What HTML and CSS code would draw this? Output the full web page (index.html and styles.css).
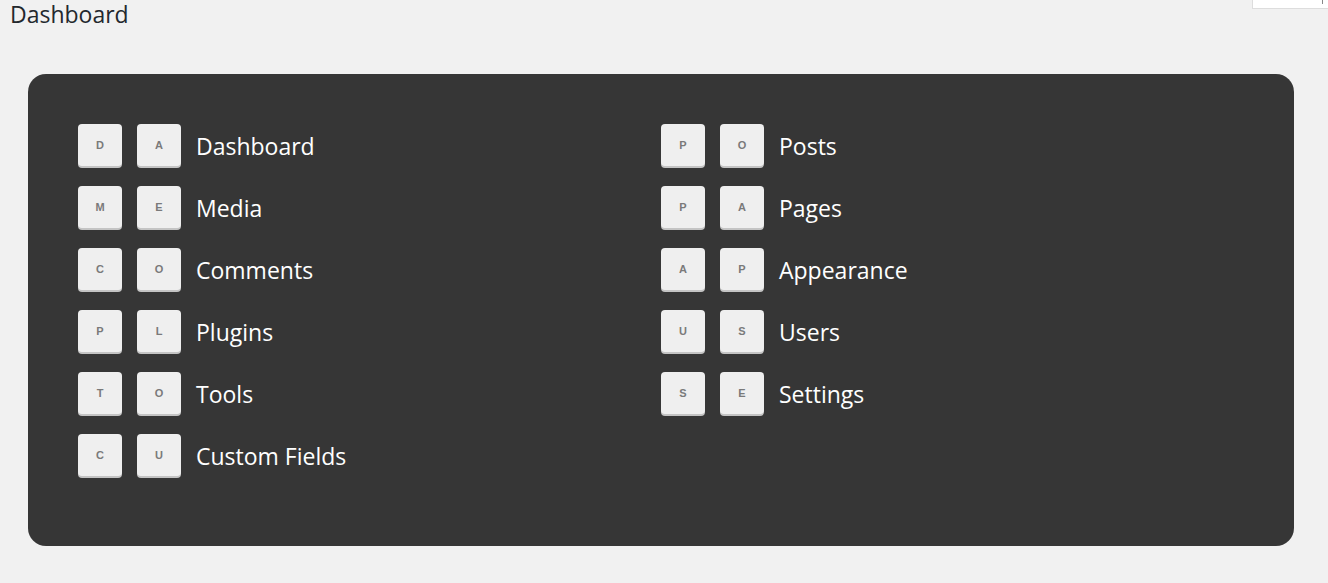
FILE: index.html
```html
<!DOCTYPE html>
<html>
<head>
<meta charset="utf-8">
<link rel="stylesheet" href="styles.css">
</head>
<body>
<div class="page">
  <div class="screen-tab"><span class="tab-mark"></span></div>
  <h1 class="title">Dashboard</h1>
  <div class="panel">
    <div class="grid">
      <div class="row"><span class="key">D</span><span class="key">A</span><span class="label">Dashboard</span></div>
      <div class="row"><span class="key">P</span><span class="key">O</span><span class="label">Posts</span></div>
      <div class="row"><span class="key">M</span><span class="key">E</span><span class="label">Media</span></div>
      <div class="row"><span class="key">P</span><span class="key">A</span><span class="label">Pages</span></div>
      <div class="row"><span class="key">C</span><span class="key">O</span><span class="label">Comments</span></div>
      <div class="row"><span class="key">A</span><span class="key">P</span><span class="label">Appearance</span></div>
      <div class="row"><span class="key">P</span><span class="key">L</span><span class="label">Plugins</span></div>
      <div class="row"><span class="key">U</span><span class="key">S</span><span class="label">Users</span></div>
      <div class="row"><span class="key">T</span><span class="key">O</span><span class="label">Tools</span></div>
      <div class="row"><span class="key">S</span><span class="key">E</span><span class="label">Settings</span></div>
      <div class="row"><span class="key">C</span><span class="key">U</span><span class="label">Custom Fields</span></div>
    </div>
  </div>
</div>
</body>
</html>
```

FILE: styles.css
```css
html, body {
  margin: 0;
  padding: 0;
  background: #f1f1f1;
}
body {
  font-family: "Open Sans", "Liberation Sans", sans-serif;
  width: 1328px;
  height: 583px;
  overflow: hidden;
}
.page {
  position: relative;
  padding: 0 34px 0 28px;
}
.screen-tab {
  position: absolute;
  top: -1px;
  right: 0;
  width: 75px;
  height: 8px;
  background: #fff;
  border: 1px solid #ddd;
  border-right: none;
}
.tab-mark {
  position: absolute;
  right: 5px;
  top: 0;
  width: 1px;
  height: 4px;
  background: #888;
}
.title {
  margin: 0 0 0 -18px;
  font-size: 23px;
  font-weight: 400;
  line-height: 28px;
  color: #23282d;
  height: 74px;
  box-sizing: border-box;
}
.panel {
  background: #363636;
  border-radius: 18px;
  padding: 50px;
  height: 472px;
  box-sizing: border-box;
}
.grid {
  display: grid;
  grid-template-columns: 583px 583px;
  row-gap: 18px;
}
.row {
  display: flex;
  align-items: center;
  height: 44px;
}
.key {
  width: 44px;
  height: 42px;
  background: #efefef;
  border-radius: 4px;
  box-shadow: 0 2px 0 #c4c4c4;
  margin-bottom: 2px;
  margin-right: 15px;
  display: flex;
  align-items: center;
  justify-content: center;
  font-family: "Liberation Sans", Arial, sans-serif;
  font-weight: 700;
  font-size: 11px;
  color: #7a7a7a;
}
.label {
  color: #fff;
  font-size: 23px;
  line-height: 28px;
  margin-top: 0;
}
```
